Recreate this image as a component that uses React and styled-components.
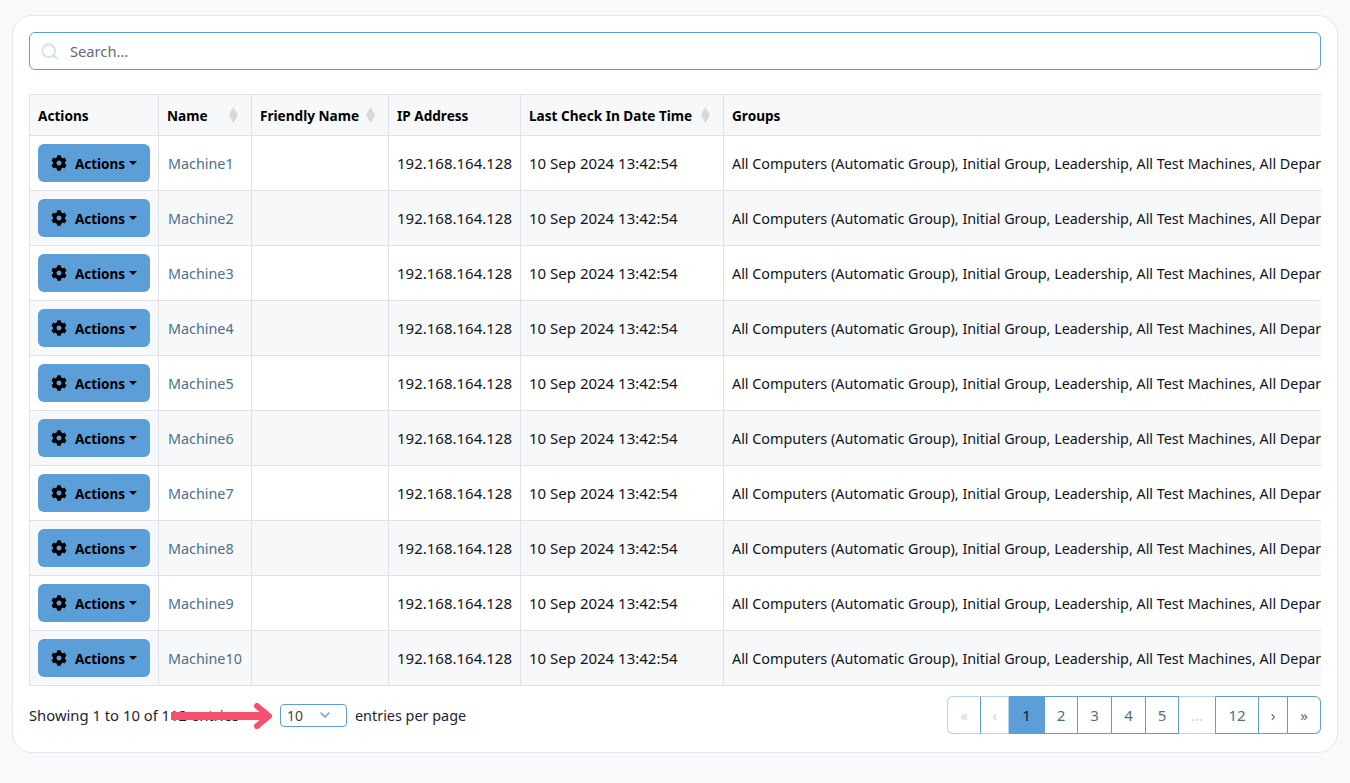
import React from "react";
import styled, { createGlobalStyle } from "styled-components";
import { FaCog } from "react-icons/fa";
import { FiSearch, FiChevronDown } from "react-icons/fi";

const FONT = `"Noto Sans", "Liberation Sans", sans-serif`;
const GROUPS =
  "All Computers (Automatic Group), Initial Group, Leadership, All Test Machines, All Departments, All Servers";

const GlobalStyle = createGlobalStyle`
  html, body {
    margin: 0;
    padding: 0;
    height: 783px;
    overflow: hidden;
    background: #f8f9fb;
    font-family: ${FONT};
  }
`;

const Page = styled.div`
  padding: 15px 12px 0;
`;

const Card = styled.div`
  position: relative;
  box-sizing: border-box;
  height: 738px;
  padding: 16px 16px 0;
  background: #fff;
  border: 1px solid #e3e6ea;
  border-radius: 20px;
`;

const SearchBox = styled.div`
  box-sizing: border-box;
  display: flex;
  align-items: center;
  height: 38px;
  padding-left: 10px;
  gap: 11px;
  border: 1px solid #5c9ed8;
  border-radius: 6px;
  color: #cfe2f3;
  font-size: 19px;
`;

const SearchInput = styled.div`
  font-size: 14.7px;
  color: #5f6b7a;
`;

const TableWrap = styled.div`
  margin-top: 24px;
  overflow: hidden;
`;

const Table = styled.table`
  width: 1800px;
  table-layout: fixed;
  border-collapse: collapse;
  font-size: 14.35px;
  color: #10141a;
`;

const Th = styled.th`
  height: 41px;
  padding: 0 8px;
  box-sizing: border-box;
  background: #f7f8fa;
  border: 1px solid #dfe2e8;
  text-align: left;
  font-size: 13.6px;
  font-weight: 700;
  color: #000;
  white-space: nowrap;
`;

const Td = styled.td`
  height: 55px;
  padding: 0 8px;
  box-sizing: border-box;
  border: 1px solid #dfe2e8;
  white-space: nowrap;
  background: ${(p) => (p.$odd ? "#fff" : "#f7f8fa")};
`;

const NumberCell = styled(Td)`
  font-size: 15px;
`;

const HeadInner = styled.div`
  display: flex;
  align-items: center;
  justify-content: space-between;
  padding-right: 5px;
`;

const SortIcon = styled.svg`
  width: 9px;
  height: 16px;
  flex: none;
  fill: #d9d9d9;
`;

const ActionButton = styled.div`
  box-sizing: border-box;
  display: flex;
  align-items: center;
  justify-content: center;
  width: 112px;
  height: 38px;
  gap: 8px;
  background: #5c9ed8;
  border-radius: 6px;
  font-weight: 700;
  font-size: 13.5px;
  color: #000;
`;

const ButtonLabel = styled.span`
  padding-top: 2px;
`;

const Caret = styled.span`
  margin-left: -4px;
  width: 0;
  height: 0;
  border-left: 4px solid transparent;
  border-right: 4px solid transparent;
  border-top: 4px solid #000;
`;

const MachineName = styled.span`
  margin-left: 1px;
  color: #4d7089;
`;

const Footer = styled.div`
  display: flex;
  align-items: center;
  justify-content: space-between;
  margin-top: 10px;
  font-size: 14.4px;
  color: #1c2430;
`;

const PageInfo = styled.div`
  display: flex;
  align-items: center;
`;

const Showing = styled.span`
  width: 251px;
  font-size: 14.8px;
`;

const PerPage = styled.div`
  box-sizing: border-box;
  display: flex;
  align-items: center;
  justify-content: space-between;
  width: 67px;
  height: 23px;
  padding: 0 13px 0 6px;
  margin-right: 8px;
  border: 1px solid #5c9ed8;
  border-radius: 4px;
  font-size: 14px;
  color: #4a4030;
`;

const Chevron = styled(FiChevronDown)`
  color: #5c9ed8;
  font-size: 16px;
`;

const Pager = styled.div`
  display: flex;
  height: 38px;
`;

const PageCell = styled.div`
  box-sizing: border-box;
  display: flex;
  align-items: center;
  justify-content: center;
  width: ${(p) => p.$w}px;
  border: 1px solid ${(p) => (p.$muted ? "#b5d3ee" : "#5c9ed8")};
  border-right-color: ${(p) => (p.$softEdge ? "#b5d3ee" : "#5c9ed8")};
  border-left-width: ${(p) => (p.$first ? 1 : 0)}px;
  border-radius: ${(p) =>
    p.$first ? "6px 0 0 6px" : p.$last ? "0 6px 6px 0" : "0"};
  background: ${(p) => (p.$active ? "#5c9ed8" : "#fff")};
  color: ${(p) => (p.$active ? "#10202c" : p.$muted ? "#bcd7ee" : "#4d7089")};
  font-size: 15px;
`;

const Arrow = styled.svg`
  position: absolute;
  left: 158px;
  top: 687px;
  width: 102px;
  height: 26px;
`;

const columns = [
  { label: "Actions", w: 129 },
  { label: "Name", w: 93, sort: true },
  { label: "Friendly Name", w: 137, sort: true },
  { label: "IP Address", w: 132 },
  { label: "Last Check In Date Time", w: 203, sort: true },
  { label: "Groups", w: 1106 },
];

const pages = [
  { t: "«", w: 34, muted: true },
  { t: "‹", w: 28, muted: true, softEdge: true },
  { t: "1", w: 36, active: true },
  { t: "2", w: 33 },
  { t: "3", w: 34 },
  { t: "4", w: 34 },
  { t: "5", w: 33 },
  { t: "…", w: 37, muted: true },
  { t: "12", w: 43 },
  { t: "›", w: 29 },
  { t: "»", w: 33 },
];

const rows = Array.from({ length: 10 }, (_, i) => `Machine${i + 1}`);

export default function App() {
  return (
    <Page>
      <GlobalStyle />
      <Card>
        <SearchBox>
          <FiSearch strokeWidth={2.6} />
          <SearchInput>Search...</SearchInput>
        </SearchBox>
        <TableWrap>
          <Table>
            <colgroup>
              {columns.map((c) => (
                <col key={c.label} width={c.w} />
              ))}
            </colgroup>
            <thead>
              <tr>
                {columns.map((c) => (
                  <Th key={c.label}>
                    <HeadInner>
                      {c.label}
                      {c.sort && (
                        <SortIcon viewBox="0 0 9 16">
                          <polygon points="4.5,0 9,8 4.5,16 0,8" />
                        </SortIcon>
                      )}
                    </HeadInner>
                  </Th>
                ))}
              </tr>
            </thead>
            <tbody>
              {rows.map((name, i) => (
                <tr key={name}>
                  <Td $odd={i % 2 === 0}>
                    <ActionButton>
                      <FaCog size={16} />
                      <ButtonLabel>Actions</ButtonLabel>
                      <Caret />
                    </ActionButton>
                  </Td>
                  <Td $odd={i % 2 === 0}>
                    <MachineName>{name}</MachineName>
                  </Td>
                  <Td $odd={i % 2 === 0} />
                  <NumberCell $odd={i % 2 === 0}>192.168.164.128</NumberCell>
                  <NumberCell $odd={i % 2 === 0}>10 Sep 2024 13:42:54</NumberCell>
                  <Td $odd={i % 2 === 0}>{GROUPS}</Td>
                </tr>
              ))}
            </tbody>
          </Table>
        </TableWrap>
        <Footer>
          <PageInfo>
            <Showing>Showing 1 to 10 of 112 entries</Showing>
            <PerPage>
              10
              <Chevron />
            </PerPage>
            entries per page
          </PageInfo>
          <Pager>
            {pages.map((p, i) => (
              <PageCell
                key={p.t}
                $w={p.w}
                $first={i === 0}
                $last={i === pages.length - 1}
                $active={p.active}
                $muted={p.muted}
                $softEdge={p.softEdge}
              >
                {p.t}
              </PageCell>
            ))}
          </Pager>
        </Footer>
        <Arrow viewBox="0 0 102 26">
          <path d="M2 13H92" stroke="#f5516f" strokeWidth="8" strokeLinecap="round" fill="none" />
          <path d="M86 3L98 13L86 23" stroke="#f5516f" strokeWidth="6" strokeLinecap="round" strokeLinejoin="round" fill="none" />
        </Arrow>
      </Card>
    </Page>
  );
}
